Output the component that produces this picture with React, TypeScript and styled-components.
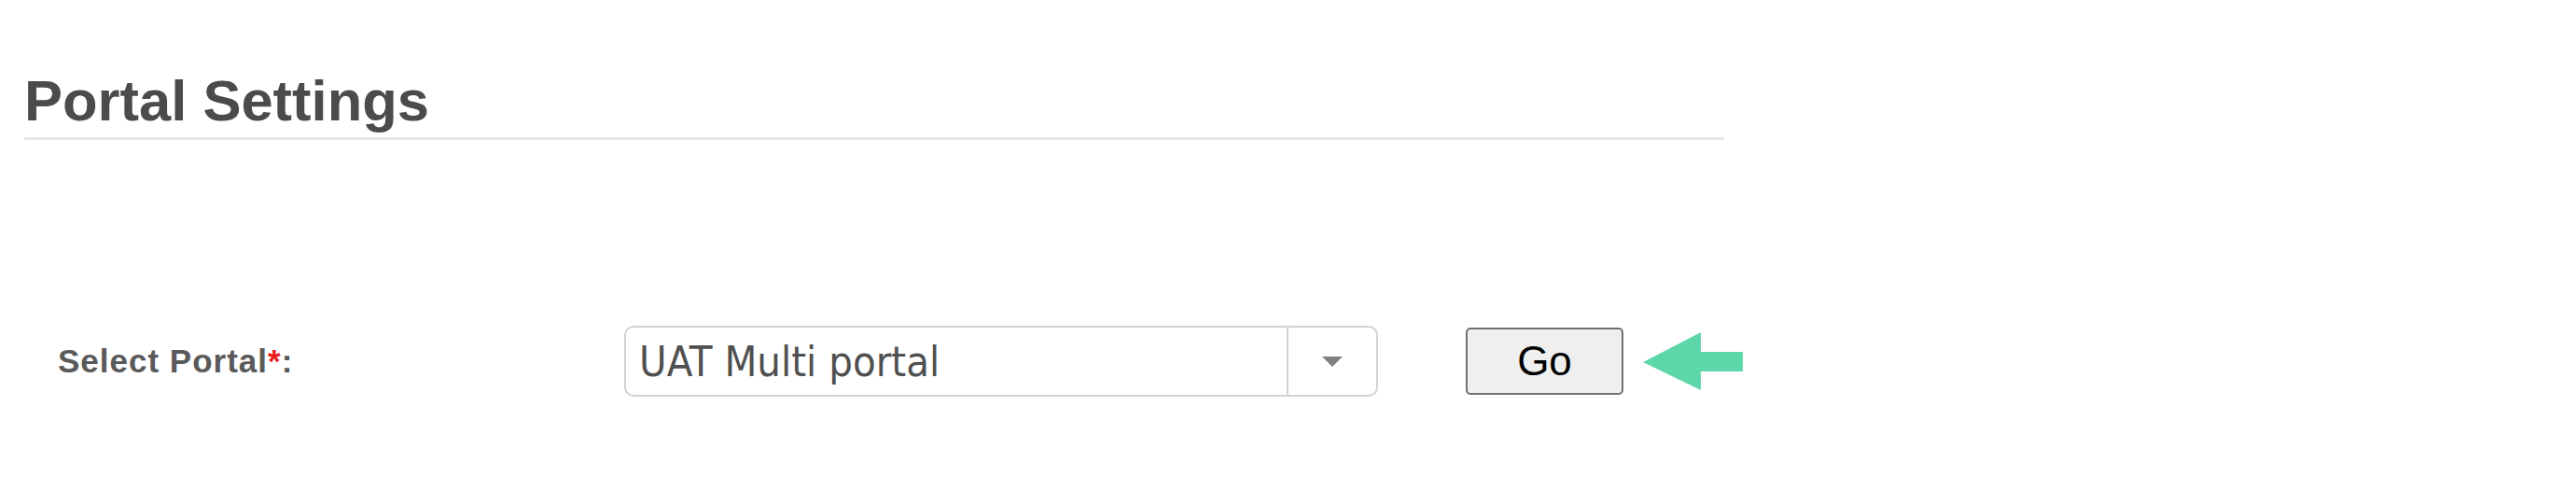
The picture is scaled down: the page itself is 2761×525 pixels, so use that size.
import React from "react";
import styled, { createGlobalStyle } from "styled-components";

const GlobalStyle = createGlobalStyle`
  html, body {
    margin: 0;
    padding: 0;
    background: #ffffff;
  }
  body {
    font-family: "Liberation Sans", Arial, sans-serif;
  }
`;

const Page = styled.div`
  width: 2761px;
  height: 525px;
  padding-top: 77px;
  box-sizing: border-box;
`;

const Header = styled.div`
  margin-left: 26px;
  width: 1822px;
  padding-bottom: 8px;
  border-bottom: 3px solid #e6e6e6;
`;

const Title = styled.h1`
  margin: 0;
  font-family: "Liberation Sans", Arial, sans-serif;
  font-weight: bold;
  font-size: 61.5px;
  line-height: 62px;
  color: #4b4b4b;
`;

const FormRow = styled.div`
  display: flex;
  align-items: center;
  margin-top: 199px;
  padding-left: 62px;
  height: 76px;
`;

const Label = styled.label`
  width: 607px;
  flex: none;
  font-family: "Liberation Sans", Arial, sans-serif;
  font-weight: bold;
  font-size: 35px;
  letter-spacing: 1px;
  color: #5a5a5a;
`;

const Required = styled.span`
  color: #e81c1c;
`;

const SelectBox = styled.div`
  display: flex;
  width: 808px;
  height: 76px;
  box-sizing: border-box;
  border: 2px solid #d2d2d2;
  border-radius: 10px;
  background: #ffffff;
  flex: none;
`;

const SelectValue = styled.div`
  flex: 1;
  display: flex;
  align-items: center;
  padding-left: 14px;
  font-family: "DejaVu Sans Condensed", "DejaVu Sans", sans-serif;
  font-stretch: condensed;
  font-size: 45px;
  color: #505050;
  white-space: nowrap;
`;

const SelectToggle = styled.div`
  width: 94px;
  flex: none;
  border-left: 2px solid #d2d2d2;
  display: flex;
  align-items: center;
  justify-content: center;
`;

const Caret = styled.span`
  width: 0;
  height: 0;
  border-left: 11px solid transparent;
  border-right: 11px solid transparent;
  border-top: 11px solid #808080;
`;

const GoButton = styled.button`
  margin-left: 94px;
  width: 169px;
  height: 72px;
  box-sizing: border-box;
  border: 2px solid #707070;
  border-radius: 5px;
  background: #efefef;
  font-family: "Liberation Sans", Arial, sans-serif;
  font-size: 44px;
  color: #000000;
  padding: 0;
  flex: none;
`;

const ArrowIcon = styled.svg`
  margin-left: 21px;
  flex: none;
`;

export default function App() {
  return (
    <>
      <GlobalStyle />
      <Page>
        <Header>
          <Title>Portal Settings</Title>
        </Header>
        <FormRow>
          <Label>
            Select Portal<Required>*</Required>:
          </Label>
          <SelectBox>
            <SelectValue>UAT Multi portal</SelectValue>
            <SelectToggle>
              <Caret />
            </SelectToggle>
          </SelectBox>
          <GoButton>Go</GoButton>
          <ArrowIcon width="107" height="62" viewBox="0 0 107 62">
            <polygon
              points="0,32 62,0 62,21 107,21 107,42 62,42 62,62"
              fill="#5dd6a9"
            />
          </ArrowIcon>
        </FormRow>
      </Page>
    </>
  );
}
